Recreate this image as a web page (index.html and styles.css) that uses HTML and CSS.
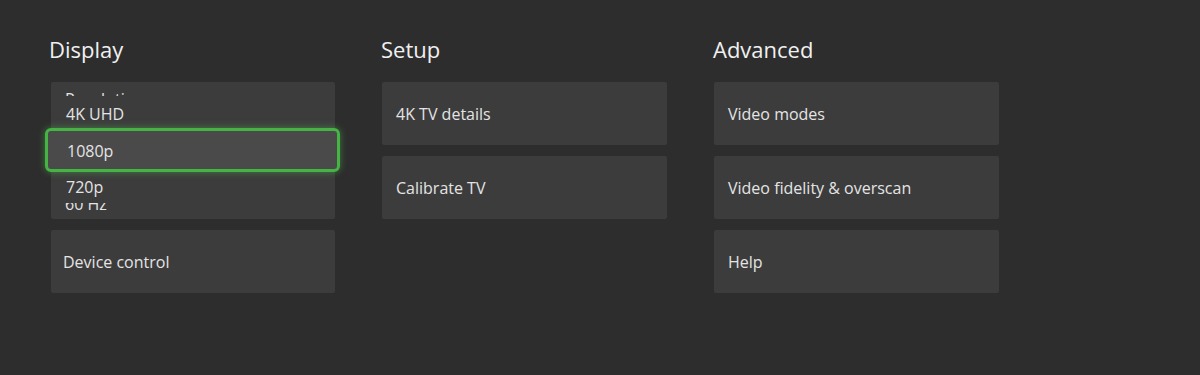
FILE: index.html
```html
<!DOCTYPE html>
<html lang="en">
<head>
    <meta charset="UTF-8">
    <meta name="viewport" content="width=device-width, initial-scale=1.0">
    <title>TV &amp; display options</title>
    <link rel="stylesheet" href="styles.css">
</head>
<body>
    <div class="columns">
        <div class="column display-column">
            <h2>Display</h2>
            <div class="tile two-line">
                <span class="label">Resolution</span>
                <span class="value">1080p</span>
            </div>
            <div class="tile two-line">
                <span class="label">Refresh rate</span>
                <span class="value">60 Hz</span>
            </div>
            <div class="tile device">Device control</div>

            <div class="dropdown">
                <div class="option">4K UHD</div>
                <div class="option selected">1080p</div>
                <div class="option">720p</div>
            </div>
        </div>

        <div class="column">
            <h2>Setup</h2>
            <div class="tile">4K TV details</div>
            <div class="tile">Calibrate TV</div>
        </div>

        <div class="column">
            <h2>Advanced</h2>
            <div class="tile">Video modes</div>
            <div class="tile">Video fidelity &amp; overscan</div>
            <div class="tile">Help</div>
        </div>
    </div>
</body>
</html>
```

FILE: styles.css
```css
body {
    margin: 0;
    padding: 0;
    background: #2d2d2d;
    color: #e4e4e4;
    font-family: 'Open Sans', 'Noto Sans', sans-serif;
    height: 375px;
    overflow: hidden;
}

.columns {
    display: grid;
    grid-template-columns: 284px 285px 285px;
    column-gap: 47px;
    padding: 35px 0 0 51px;
}

.column {
    display: flex;
    flex-direction: column;
    gap: 11px;
    position: relative;
}

.column h2 {
    margin: 0 0 7px -1px;
    font-size: 22px;
    font-weight: 400;
    line-height: 29px;
    color: #f0f0f0;
}

.display-column h2 {
    margin-left: -2px;
}

.tile {
    height: 63px;
    background: #3c3c3c;
    border-radius: 2px;
    padding: 0 14px;
    display: flex;
    align-items: center;
    font-size: 16px;
    box-sizing: border-box;
}

.tile.two-line {
    flex-direction: column;
    align-items: flex-start;
    justify-content: flex-start;
    padding-top: 6px;
    line-height: 22px;
}

.tile.two-line + .tile.two-line {
    justify-content: flex-end;
    padding-top: 0;
    padding-bottom: 4px;
}

.tile.device {
    padding-left: 12px;
}

.dropdown {
    position: absolute;
    top: 61px;
    left: 0;
    right: 0;
    height: 107px;
    background: #3c3c3c;
    display: flex;
    flex-direction: column;
}

.option {
    height: 36.5px;
    flex: none;
    display: flex;
    align-items: center;
    padding-left: 15px;
    font-size: 16px;
    position: relative;
}

.option.selected {
    padding-left: 16px;
    z-index: 1;
    isolation: isolate;
}

.option.selected::before {
    content: "";
    position: absolute;
    top: -5px;
    bottom: -3px;
    left: -6px;
    right: -5px;
    background: #4a4a4a;
    border: 3px solid #45b445;
    border-radius: 6px;
    box-shadow: 0 0 7px rgba(80, 200, 80, 0.5);
    z-index: -1;
}
```
